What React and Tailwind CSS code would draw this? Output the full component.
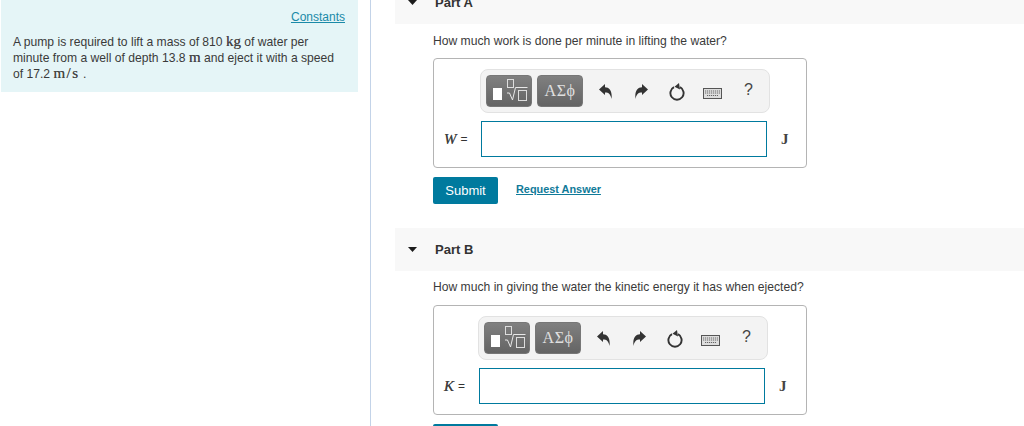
const serif = "font-['Liberation_Serif',serif]";

function Toolbar({ ml }) {
  return (
    <div className={`${ml} w-[290px] h-[44px] rounded-lg bg-[#f3f3f3] border border-[#e2e2e2] flex items-center pl-[5px]`}>
      <div className="w-[46px] h-[32px] rounded-[4px] bg-gradient-to-b from-[#808080] to-[#646464] border border-[#777] relative shrink-0">
        <svg width="44" height="30" viewBox="0 0 44 30" className="absolute left-0 top-0">
          <rect x="6" y="12" width="9" height="12" fill="#fff" />
          <rect x="20.5" y="3.5" width="6" height="8" fill="none" stroke="#ddd" />
          <path d="M20 17 L22.5 17 L25.5 24 L28.5 11.5 L40.5 11.5" fill="none" stroke="#e8e8e8" />
          <rect x="31.5" y="14.5" width="8" height="10" fill="none" stroke="#ddd" />
        </svg>
      </div>
      <div className={`ml-[5px] w-[46px] h-[32px] rounded-[4px] bg-gradient-to-b from-[#808080] to-[#646464] border border-[#777] flex items-center justify-center text-[#e0e0e0] text-[16px] tracking-[0.5px] shrink-0 ${serif}`}>
        ΑΣϕ
      </div>
      <svg width="13" height="15" viewBox="0 0 13 15" className="ml-[16px] mt-[1px] shrink-0">
        <path d="M0 5.5 L6 0 V3.3 C10.5 3.3 13.5 7 12.5 15 C11.5 10.5 10 8.6 6 8.6 V11 Z" fill="#333" />
      </svg>
      <svg width="13" height="15" viewBox="0 0 13 15" className="ml-[23px] mt-[1px] shrink-0">
        <path d="M13 5.5 L7 0 V3.3 C2.5 3.3 -0.5 7 0.5 15 C1.5 10.5 3 8.6 7 8.6 V11 Z" fill="#333" />
      </svg>
      <svg width="16" height="18" viewBox="0 0 16 18" className="ml-[21px] mt-[2px] shrink-0">
        <path d="M5 4.2 A6.6 6.6 0 1 0 11 4.2" fill="none" stroke="#333" strokeWidth="1.9" />
        <path d="M10 0 L5.5 3.8 L11 6.5 Z" fill="#333" />
      </svg>
      <svg width="19" height="11" viewBox="0 0 19 11" className="ml-[18px] mt-[4px] shrink-0">
        <rect x="0.5" y="0.5" width="18" height="10" fill="#ddd" stroke="#555" />
        <path d="M2 3 H17 M2 5 H17 M4 7.5 H15" stroke="#666" strokeWidth="1" strokeDasharray="1.2 0.8" />
      </svg>
      <span className="ml-[22px] text-[16px] text-[#444] font-['Liberation_Sans',sans-serif] leading-none -mt-[2px]">?</span>
    </div>
  );
}

function Answer({ letter, offset, className }) {
  return (
    <div className={`w-[374px] h-[110px] rounded-[4px] border border-[#b4b4b4] bg-white pt-[10px] ${className}`}>
      <Toolbar ml={offset.toolbar} />
      <div className="flex items-center mt-[8px] h-[36px]">
        <div className={`${offset.label} text-[13px] text-[#333] flex items-center gap-[4px] shrink-0`}>
          <span className={`italic text-[15px] text-[#3f3f3f] ${serif} [text-shadow:0_0_0_#555]`}>{letter}</span>
          <span className="text-[12px]">=</span>
        </div>
        <div className="w-[286px] h-[36px] border border-[#007a9e] bg-white shrink-0" />
        <span className={`ml-[14px] font-bold text-[15px] text-[#444] ${serif}`}>J</span>
      </div>
    </div>
  );
}

function PartHeader({ label, className }) {
  return (
    <div className={`ml-[24px] h-[43px] flex items-center bg-[#f8f8f8] ${className}`}>
      <svg width="9" height="5" viewBox="0 0 9 5" className="ml-[13px] shrink-0">
        <path d="M0 0 H9 L4.5 5 Z" fill="#1c1c1c" />
      </svg>
      <span className="ml-[18px] text-[13px] font-bold text-[#333] leading-none">{label}</span>
    </div>
  );
}

export default function App() {
  const math = `text-[15px] leading-none text-[#444] ${serif} [text-shadow:0_0_0_#666]`;
  return (
    <div className="w-[1024px] h-[426px] overflow-hidden flex bg-white font-['Liberation_Sans',sans-serif] text-[#333]">
      <div className="w-[370px] shrink-0 border-r border-[#c3d3e8] box-content">
        <div className="ml-[1px] w-[357px] h-[92px] bg-[#e5f5f7] pl-[12px] pr-[13px] pt-[10px]">
          <div className="text-right text-[12px] leading-[15px] text-[#1a8aa8] underline">Constants</div>
          <p className="mt-[9px] text-[12.13px] leading-[15px] text-[#3a3a3a] w-[330px]">
            A pump is required to lift a mass of 810 <span className={math}>kg</span> of water per minute from a well of depth 13.8 <span className={math}>m</span> and eject it with a speed of 17.2 <span className={`${math} tracking-[1.5px]`}>m/s</span> .
          </p>
        </div>
      </div>
      <div className="flex-1 min-w-0">
        <PartHeader label="Part A" className="-mt-[19px]" />
        <div className="ml-[62px] mt-[10px] text-[12.13px] leading-[15px] text-[#3a3a3a]">How much work is done per minute in lifting the water?</div>
        <Answer letter="W" offset={{ toolbar: "ml-[46px]", label: "ml-[10px] w-[37px]" }} className="ml-[62px] mt-[9px]" />
        <div className="ml-[62px] mt-[9px] flex items-center h-[27px]">
          <div className="w-[65px] h-[27px] rounded-[2px] bg-[#007a9e] text-white text-[13px] flex items-center justify-center">Submit</div>
          <span className="ml-[18px] text-[10.9px] font-bold text-[#107a99] underline -mt-[2px]">Request Answer</span>
        </div>
        <PartHeader label="Part B" className="mt-[24px]" />
        <div className="ml-[62px] mt-[9px] text-[12.13px] leading-[15px] text-[#3a3a3a]">How much in giving the water the kinetic energy it has when ejected?</div>
        <Answer letter="K" offset={{ toolbar: "ml-[44px]", label: "ml-[10px] w-[35px]" }} className="ml-[62px] mt-[10px]" />
        <div className="ml-[62px] mt-[9px] w-[65px] h-[26px] rounded-[2px] bg-[#007a9e]" />
      </div>
    </div>
  );
}
